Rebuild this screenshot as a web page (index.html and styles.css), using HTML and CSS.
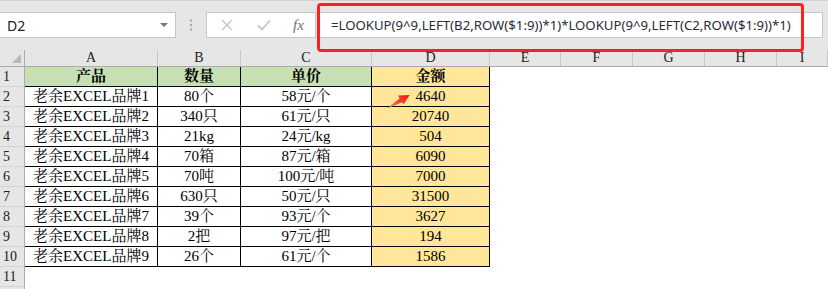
FILE: index.html
```html
<!DOCTYPE html>
<html lang="zh-CN">
<head>
    <meta charset="UTF-8">
    <title>LOOKUP</title>
    <link rel="stylesheet" href="styles.css">
</head>
<body>
    <div class="app">
        <div class="formula_bar">
            <div class="name_box">
                <span>D2</span>
                <svg class="caret" width="8" height="5" viewBox="0 0 8 5"><path d="M0 0h8L4 4z" fill="#777"/></svg>
            </div>
            <div class="grip">
                <svg width="4" height="12" viewBox="0 0 4 12"><circle cx="2" cy="1.5" r="1.2" fill="#a8a8a8"/><circle cx="2" cy="6" r="1.2" fill="#a8a8a8"/><circle cx="2" cy="10.5" r="1.2" fill="#a8a8a8"/></svg>
            </div>
            <div class="fx_box">
                <svg width="12" height="12" viewBox="0 0 12 12"><path d="M1 1l10 10M11 1L1 11" stroke="#c4c4c4" stroke-width="1.4"/></svg>
                <svg width="14" height="12" viewBox="0 0 14 12"><path d="M1 6.5l4 4L13 1.5" stroke="#c4c4c4" stroke-width="1.8" fill="none"/></svg>
                <span class="fx">fx</span>
            </div>
            <div class="formula_input">=LOOKUP(9^9,LEFT(B2,ROW($1:9))*1)*LOOKUP(9^9,LEFT(C2,ROW($1:9))*1)</div>
            <div class="highlight"></div>
        </div>

        <div class="sheet">
            <div class="row col_head">
                <div class="corner"></div>
                <div>A</div><div>B</div><div>C</div><div>D</div><div>E</div><div>F</div><div>G</div><div>H</div><div>I</div>
            </div>
            <div class="row">
                <div class="num">1</div>
                <div class="cell head">产品</div><div class="cell head">数量</div><div class="cell head">单价</div><div class="cell head gold">金额</div>
                <div class="blank"></div>
            </div>
            <div class="row">
                <div class="num">2</div>
                <div class="cell">老余EXCEL品牌1</div><div class="cell">80个</div><div class="cell">58元/个</div><div class="cell gold">4640</div>
                <div class="blank"></div>
            </div>
            <div class="row">
                <div class="num">3</div>
                <div class="cell">老余EXCEL品牌2</div><div class="cell">340只</div><div class="cell">61元/只</div><div class="cell gold">20740</div>
                <div class="blank"></div>
            </div>
            <div class="row">
                <div class="num">4</div>
                <div class="cell">老余EXCEL品牌3</div><div class="cell">21kg</div><div class="cell">24元/kg</div><div class="cell gold">504</div>
                <div class="blank"></div>
            </div>
            <div class="row">
                <div class="num">5</div>
                <div class="cell">老余EXCEL品牌4</div><div class="cell">70箱</div><div class="cell">87元/箱</div><div class="cell gold">6090</div>
                <div class="blank"></div>
            </div>
            <div class="row">
                <div class="num">6</div>
                <div class="cell">老余EXCEL品牌5</div><div class="cell">70吨</div><div class="cell">100元/吨</div><div class="cell gold">7000</div>
                <div class="blank"></div>
            </div>
            <div class="row">
                <div class="num">7</div>
                <div class="cell">老余EXCEL品牌6</div><div class="cell">630只</div><div class="cell">50元/只</div><div class="cell gold">31500</div>
                <div class="blank"></div>
            </div>
            <div class="row">
                <div class="num">8</div>
                <div class="cell">老余EXCEL品牌7</div><div class="cell">39个</div><div class="cell">93元/个</div><div class="cell gold">3627</div>
                <div class="blank"></div>
            </div>
            <div class="row">
                <div class="num">9</div>
                <div class="cell">老余EXCEL品牌8</div><div class="cell">2把</div><div class="cell">97元/把</div><div class="cell gold">194</div>
                <div class="blank"></div>
            </div>
            <div class="row">
                <div class="num">10</div>
                <div class="cell">老余EXCEL品牌9</div><div class="cell">26个</div><div class="cell">61元/个</div><div class="cell gold">1586</div>
                <div class="blank"></div>
            </div>
            <div class="row">
                <div class="num">11</div>
            </div>
            <div class="row">
                <div class="num"></div>
            </div>
        </div>

        <svg class="arrow" width="28" height="18" viewBox="0 0 28 18">
            <defs>
                <linearGradient id="ag" x1="0" y1="1" x2="1" y2="0">
                    <stop offset="0" stop-color="#ff7a5c"/>
                    <stop offset="1" stop-color="#e8160c"/>
                </linearGradient>
            </defs>
            <polygon points="3,15.5 15.6,5.6 14.2,2.4 25.5,2 19.6,11.6 18.2,9.2" fill="url(#ag)"/>
        </svg>
    </div>
</body>
</html>
```

FILE: styles.css
```css
*{
    margin: 0;
    padding: 0;
    box-sizing: border-box;
}

body{
    width: 828px;
    height: 289px;
    overflow: hidden;
    background: #fff;
}

.app{
    position: relative;
    width: 828px;
    height: 289px;
    overflow: hidden;
}

.formula_bar{
    position: relative;
    height: 50px;
    background: #e6e6e6;
    border-top: 1px solid #d2d2d2;
    padding-top: 11px;
    display: flex;
    align-items: flex-start;
}

.name_box{
    width: 176px;
    height: 26px;
    background: #fff;
    border: 1px solid #c6c6c6;
    border-left: none;
    display: flex;
    align-items: center;
    justify-content: space-between;
    padding: 0 7px 0 7px;
    font-family: "Noto Sans", sans-serif;
    font-size: 14px;
    color: #222;
}

.grip{
    width: 30px;
    height: 26px;
    display: flex;
    align-items: center;
    justify-content: center;
}

.fx_box{
    width: 110px;
    height: 26px;
    background: #fff;
    border: 1px solid #c6c6c6;
    display: flex;
    align-items: center;
    padding-left: 14px;
    gap: 24px;
}

.fx{
    font-family: "Liberation Serif", serif;
    font-style: italic;
    font-size: 15px;
    color: #707070;
    margin-left: -2px;
}

.formula_input{
    margin-left: 1px;
    width: 506px;
    height: 26px;
    background: #fff;
    border: 1px solid #c6c6c6;
    padding-left: 13px;
    font-family: "Noto Sans", sans-serif;
    font-size: 13.2px;
    line-height: 24px;
    color: #2b2b3a;
    white-space: nowrap;
    overflow: hidden;
}

.highlight{
    position: absolute;
    left: 317px;
    top: 2px;
    width: 487px;
    height: 49px;
    border: 3px solid #ff1f1f;
    border-radius: 4px;
}

.row{
    display: grid;
    grid-template-columns: 25px 133px 83px 131px 118px 1fr;
    height: 20px;
}

.col_head{
    grid-template-columns: 25px 133px 83px 131px 118px 71px 72px 72px 72px 1fr;
    height: 17px;
    background: #e6e6e6;
    border-bottom: 1px solid #ababab;
}

.col_head div{
    border-right: 1px solid #c8c8c8;
    font-family: "Liberation Serif", serif;
    font-size: 14px;
    line-height: 16px;
    text-align: center;
    color: #222;
}

.col_head .corner{
    position: relative;
    border-right: 1px solid #ababab;
}

.corner::after{
    content: "";
    position: absolute;
    right: 3px;
    bottom: 3px;
    border-left: 9px solid transparent;
    border-bottom: 9px solid #b8b8b8;
}

.num{
    background: #e6e6e6;
    border-right: 1px solid #ababab;
    border-bottom: 1px solid #d4d4d4;
    font-family: "Liberation Serif", serif;
    font-size: 14px;
    line-height: 19px;
    padding-left: 3px;
    color: #222;
}

.cell{
    border-right: 1px solid #000;
    border-bottom: 1px solid #000;
    font-family: "Liberation Serif", "Noto Serif CJK SC", "Noto Sans CJK SC", serif;
    font-size: 15px;
    line-height: 19px;
    text-align: center;
    color: #000;
    white-space: nowrap;
}

.cell.head{
    background: #c6e0b4;
    font-weight: bold;
}

.cell.gold{
    background: #ffe699;
}

.arrow{
    position: absolute;
    left: 384px;
    top: 93px;
}
```
